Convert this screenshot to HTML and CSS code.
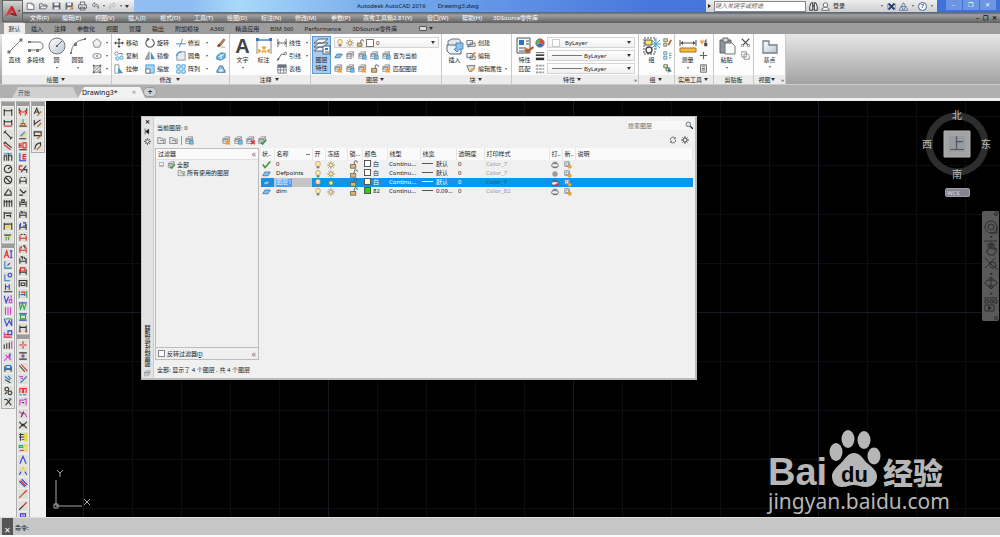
FILE: index.html
```html
<!DOCTYPE html>
<html lang="zh-CN">
<head>
<meta charset="utf-8">
<title>Autodesk AutoCAD 2016 Drawing3.dwg</title>
<link rel="stylesheet" href="styles.css">
</head>
<body>
<svg class="defs" aria-hidden="true">
<defs>
<linearGradient id="gb" x1="0" y1="0" x2="1" y2="1"><stop offset="0" stop-color="#fff"/><stop offset="1" stop-color="#b9c4d2"/></linearGradient>
<symbol id="new" viewBox="0 0 16 16"><path d="M2 3h8l4 3v8H2z" fill="#fff" stroke="#555b66" stroke-width="1.5"/><path d="M10 3v3h4" fill="none" stroke="#555b66"/></symbol>
<symbol id="open" viewBox="0 0 16 16"><path d="M1 13V4h5l1 2h6v2M1 13l3-5h11l-3 5z" fill="#e8edf2" stroke="#555b66" stroke-width="1.4"/></symbol>
<symbol id="save" viewBox="0 0 16 16"><path d="M1 2h14v12H1z" fill="#5d6570"/><path d="M4 2h8v5H4zM4 10h8v4H4z" fill="#eef2f6"/></symbol>
<symbol id="saveas" viewBox="0 0 16 16"><path d="M1 2h13v12H1z" fill="#5d6570"/><path d="M4 2h7v5H4zM4 10h7v4H4z" fill="#eef2f6"/><path d="M8 14l6-8 2 2-6 7z" fill="#e39b3a"/></symbol>
<symbol id="print" viewBox="0 0 16 16"><path d="M4 6V1h8v5M1 6h14v6H1zM4 10h8v5H4z" fill="#f3f5f7" stroke="#4b515b" stroke-width="1.5"/></symbol>
<symbol id="undo" viewBox="0 0 16 16"><path d="M6 2L2 6l4 4V7.500q6-1 7 5 3-8-7-8z" fill="#e9edf2" stroke="#5b626d" stroke-width="1.300"/></symbol>
<symbol id="redo" viewBox="0 0 16 16"><path d="M10 2l4 4-4 4V7.500q-6-1-7 5-3-8 7-8z" fill="#eee" stroke="#aaa" stroke-width="1.300"/></symbol>
<symbol id="line" viewBox="0 0 18 18"><path d="M3 15L15 3" stroke="#777" stroke-width="1"/><path d="M1.500 13.500h3v3h-3zM13.500 1.500h3v3h-3z" fill="#777"/></symbol>
<symbol id="pline" viewBox="0 0 18 18"><path d="M2 5h9q5 0 5 4t-5 4H3" fill="none" stroke="#777"/><path d="M1 4h3v2H1zM1 12h3v3H1zM9 12h3v3H9z" fill="#777"/></symbol>
<symbol id="circle" viewBox="0 0 18 18"><circle cx="9" cy="9" r="8" fill="url(#gb)" stroke="#777"/><path d="M9 9l5-5" stroke="#666"/><path d="M8 8h2v2H8z" fill="#666"/></symbol>
<symbol id="arc" viewBox="0 0 18 18"><path d="M2 16Q3 4 16 2" fill="none" stroke="#777"/><path d="M1 15h2v2H1zM5 6h3v3H5zM15 1h2v2h-2z" fill="#777"/></symbol>
<symbol id="poly" viewBox="0 0 12 12"><path d="M6 1l5 4-2 6H3L1 5z" fill="#edf1f5" stroke="#777"/></symbol>
<symbol id="ell" viewBox="0 0 12 12"><ellipse cx="6" cy="6" rx="5" ry="3" fill="#edf1f5" stroke="#777"/><circle cx="6" cy="6" r="1" fill="#555"/></symbol>
<symbol id="hatch" viewBox="0 0 12 12"><path d="M2 2h8v8H2zM2 6l4-4M2 10l8-8M6 10l4-4" fill="#dde2e8" stroke="#888"/><path d="M1 1h2v2H1zM9 1h2v2H9zM1 9h2v2H1zM9 9h2v2H9z" fill="#555"/></symbol>
<symbol id="move" viewBox="0 0 12 12"><path d="M6 0l2 2.500H6.600v2.900h2.900V4L12 6 9.500 8V6.600H6.600v2.900H8L6 12 4 9.500h1.400V6.600H2.500V8L0 6l2.500-2v1.400h2.900V2.500H4z" fill="#444"/></symbol>
<symbol id="rotate" viewBox="0 0 12 12"><path d="M4 1.500A5 5 0 1 0 8 1.500" fill="none" stroke="#555" stroke-width="1.300"/><path d="M2 0l4 1-3 3z" fill="#555"/></symbol>
<symbol id="trim" viewBox="0 0 12 12"><path d="M0 7h12" stroke="#4ba2d8" stroke-width="1.300"/><path d="M4 11L8 1" stroke="#777"/></symbol>
<symbol id="erase" viewBox="0 0 12 12"><path d="M3 8l6-7 2 1-5 7z" fill="#b98553" stroke="#7a5530" stroke-width=".6"/><path d="M1 10l2-3 3 2-2 2z" fill="#8a4a2a"/><path d="M6 11h5" stroke="#999"/></symbol>
<symbol id="copy" viewBox="0 0 12 12"><circle cx="3" cy="3" r="2" fill="#fff" stroke="#777"/><circle cx="4" cy="9" r="2" fill="#d9efff" stroke="#3c95cf"/><circle cx="9" cy="8" r="2" fill="#d9efff" stroke="#3c95cf"/><path d="M6 3h4v2" fill="none" stroke="#777"/></symbol>
<symbol id="mirror" viewBox="0 0 12 12"><path d="M5 1v9H0z" fill="#aaa" stroke="#777" stroke-width=".7"/><path d="M7 1v9h5z" fill="#3c95cf"/></symbol>
<symbol id="fillet" viewBox="0 0 12 12"><path d="M1 11V6q0-5 6-5h4v10z" fill="#e6edf3" stroke="#888"/><path d="M1 6q0-5 6-5" fill="none" stroke="#3c95cf" stroke-width="1.500"/></symbol>
<symbol id="explode" viewBox="0 0 12 12"><path d="M1 6l5-4 5 1v5l-5 3-5-1z" fill="#6fb4e2" stroke="#3781b3"/><path d="M3 7l7-3M6 4v6" stroke="#fff"/></symbol>
<symbol id="stretch" viewBox="0 0 12 12"><path d="M1 1h5v10H1z" fill="#fff" stroke="#888"/><path d="M5 4l6 7H5z" fill="#3c95cf"/></symbol>
<symbol id="scale" viewBox="0 0 12 12"><path d="M1 1h10v10H1z" fill="#a9d5f2" stroke="#3c95cf"/><path d="M1 6h5v5H1z" fill="#fff" stroke="#666"/></symbol>
<symbol id="array" viewBox="0 0 12 12"><path d="M1 1h4v4H1zM7 1h4v4H7zM1 7h4v4H1zM7 7h4v4H7z" fill="#d9efff" stroke="#3c95cf"/></symbol>
<symbol id="offset" viewBox="0 0 12 12"><path d="M1 10q0-4 2-4 0-4 3-4t3 4q2 0 2 4z" fill="#8cc5ea" stroke="#3d6583"/><path d="M4 9q0-3 2-3t2 3z" fill="#fff"/></symbol>
<symbol id="dim" viewBox="0 0 18 18"><path d="M2 3v14M16 3v14" stroke="#888"/><path d="M3 3h12" stroke="#4289d2" stroke-width="1.500"/><path d="M1 1h3v3H1zM14 1h3v3h-3z" fill="#3578cb"/><path d="M4 16v-3l2 1M9 9v3M9 12l-2-2M9 12l2-2M14 16v-3l-2 1M7 16l1-2 2 0 1 2" fill="none" stroke="#eba530" stroke-width="1.500"/></symbol>
<symbol id="lin" viewBox="0 0 12 12"><path d="M1 1v10M11 1v10M1 6h10M3 4L1 6l2 2M9 4l2 2-2 2" fill="none" stroke="#555"/></symbol>
<symbol id="leader" viewBox="0 0 12 12"><path d="M1 11L5 4h4" fill="none" stroke="#555"/><circle cx="10" cy="3" r="1.500" fill="#fff" stroke="#555"/><path d="M0 12l1-4 2 2z" fill="#555"/></symbol>
<symbol id="table" viewBox="0 0 12 12"><path d="M1 1h10v10H1zM1 4h10M1 7h10M4 4v7M8 4v7" fill="#fff" stroke="#6b7280"/><path d="M1 1h10v3H1z" fill="#6b7280"/></symbol>
<symbol id="layers" viewBox="0 0 18 18"><path d="M1 6l5-4h9l-5 4zM1 10l5-4h9l-5 4zM1 14l5-4h9l-5 4z" fill="#f5f7f9" stroke="#5d6670"/><path d="M10 9h7v8h-7z" fill="#fff" stroke="#3b5f86"/><path d="M12 11h3v2h-3z" fill="#3c78b8"/><path d="M12 15h4" stroke="#555"/></symbol>
<symbol id="bulb" viewBox="0 0 12 12"><path d="M4 8Q2.500 6 2.500 4a3.500 3.500 0 0 1 7 0q0 2-1.500 4z" fill="#ffe9a4" stroke="#a99565"/><path d="M4 8h4v3H4z" fill="#777"/></symbol>
<symbol id="sun" viewBox="0 0 12 12"><path d="M6 0v12M0 6h12M2 2l8 8M10 2l-8 8" stroke="#8a7a55"/><circle cx="6" cy="6" r="3" fill="#ffe7a0" stroke="#9a8450"/></symbol>
<symbol id="lock" viewBox="0 0 12 12"><path d="M7 6V3q0-2 2-2t2 2v1" fill="none" stroke="#555" stroke-width="1.200"/><path d="M2 6h7v5H2z" fill="#d9b683" stroke="#6a5a3a"/></symbol>
<symbol id="lay" viewBox="0 0 12 12"><path d="M1 4l3-3h6L7 4zM1 7l3-3h6L7 7zM1 10V4h6v6zM7 10l3-3V1" fill="#e8ecf0" stroke="#777" stroke-width=".8"/></symbol>
<symbol id="layb" viewBox="0 0 12 12"><use href="#lay"/><path d="M6 6h5v5H6z" fill="#72bce6" stroke="#347cae" stroke-width=".7"/></symbol>
<symbol id="layo" viewBox="0 0 12 12"><use href="#lay"/><path d="M8 5l1 2h3l-2 2 1 3-3-1-3 1 1-3-2-2h3z" fill="#f19a32"/></symbol>
<symbol id="insert" viewBox="0 0 18 18"><path d="M2 4l4-2h7l2 3v6H2z" fill="#e1e7ed" stroke="#6a7684"/><path d="M1 8h11l3 3v6H4l-3-3z" fill="#eef3f7" stroke="#5a6979"/><path d="M10 6h7v6h-3l-3 3-3-3h2z" fill="#8fbfe6" stroke="#3c77ac" stroke-width=".8"/></symbol>
<symbol id="blk" viewBox="0 0 12 12"><path d="M1 3h7v5H1zM5 6h6v4H5z" fill="#eef2f5" stroke="#666"/><circle cx="3" cy="10" r="1.500" fill="#3c95cf"/></symbol>
<symbol id="blko" viewBox="0 0 12 12"><path d="M1 3h7v5H1zM5 6h6v4H5z" fill="#eef2f5" stroke="#666"/><path d="M7 5l3-4 2 1-3 4z" fill="#e98a2b"/></symbol>
<symbol id="attr" viewBox="0 0 12 12"><path d="M1 2h10L7 9H4z" fill="#ddd" stroke="#666"/><path d="M5 7l5-3 1 2-5 4z" fill="#e5a33b"/></symbol>
<symbol id="match" viewBox="0 0 18 18"><path d="M1 1h13v15H1z" fill="#f2f5f8" stroke="#4d5966"/><path d="M3 3h5v5H3z" fill="#2d74b8"/><path d="M10 4h3M10 7h3M3 11h7M3 14h5" stroke="#555"/><path d="M8 14q1-4 5-2l4-3 1 2-4 3q-2 4-6 0z" fill="#b4602d"/></symbol>
<symbol id="wheel" viewBox="0 0 12 12"><path d="M6 6V1a5 5 0 0 1 4.300 7.500z" fill="#e8463c"/><path d="M6 6l4.300 2.500a5 5 0 0 1-8.600 0z" fill="#3d63c9"/><path d="M6 6L1.700 8.500A5 5 0 0 1 6 1z" fill="#58b947"/><circle cx="6" cy="6" r="5" fill="none" stroke="#666"/></symbol>
<symbol id="lw" viewBox="0 0 12 12"><path d="M1 2h10" stroke="#444"/><path d="M1 5h10" stroke="#444" stroke-width="2"/><path d="M1 9.500h10" stroke="#333" stroke-width="3"/></symbol>
<symbol id="lt" viewBox="0 0 12 12"><path d="M1 2h10M1 6h10M1 10h10" stroke="#999" stroke-width="2" stroke-dasharray="3 1"/></symbol>
<symbol id="group" viewBox="0 0 18 18"><path d="M1 1h11v16H1z" fill="none" stroke="#555" stroke-dasharray="2 1"/><path d="M2 3h7v5H2z" fill="#f7e66a" stroke="#555"/><circle cx="6" cy="13" r="3" fill="#fff" stroke="#444" stroke-width="1.300"/><path d="M13 1v12M8 7h10M9 3l8 8M17 3l-8 8" stroke="#4aa5dd"/></symbol>
<symbol id="grp" viewBox="0 0 12 12"><path d="M1 1h5v4H1zM1 7h4v4H1z" fill="#cde6a6" stroke="#666"/><path d="M6 9l4-7 2 1-4 7z" fill="#b4602d"/></symbol>
<symbol id="grpb" viewBox="0 0 12 12"><path d="M1 1h4v4H1zM1 7h4v4H1z" fill="#cde6f6" stroke="#5685a5"/><path d="M8 3h3M8 6h3M8 9h3" stroke="#346fa2"/></symbol>
<symbol id="grps" viewBox="0 0 12 12"><path d="M1 1h5v4H1zM4 5h5v4H4z" fill="#cde6a6" stroke="#555"/><path d="M7 5l5 5H9l-2 2z" fill="#2f6fa8"/></symbol>
<symbol id="measure" viewBox="0 0 18 18"><path d="M1 3v6M17 3v6M2 6h14" stroke="#555"/><path d="M4 4L1 6l3 2zM14 4l3 2-3 2z" fill="#555"/><path d="M1 11h16v4H1z" fill="#f4bd46" stroke="#a87518"/></symbol>
<symbol id="qsel" viewBox="0 0 12 12"><path d="M10 1v4H7zM7 6h4v5H7z" fill="#444"/><path d="M4 2v7M1 5h6M2 3l4 4M6 3L2 7" stroke="#e98a2b"/></symbol>
<symbol id="point" viewBox="0 0 12 12"><path d="M6 1v10M1 6h10" stroke="#666" stroke-width="1.500"/></symbol>
<symbol id="calc" viewBox="0 0 12 12"><path d="M2 1h8v10H2z" fill="#dde2e8" stroke="#555"/><path d="M4 3h4M4 6h4M4 8h4" stroke="#555"/></symbol>
<symbol id="paste" viewBox="0 0 18 18"><path d="M2 3h11v13H2z" fill="#8d949c" stroke="#5e656d"/><path d="M5 1h5v4H5z" fill="#ddd" stroke="#666"/><path d="M7 6h7l3 3v8H7z" fill="#f7f9fb" stroke="#777"/></symbol>
<symbol id="cut" viewBox="0 0 12 12"><path d="M1 1l8 8M11 1L3 9" stroke="#555" stroke-width="1.500"/><circle cx="2" cy="10" r="1.500" fill="none" stroke="#555"/><circle cx="10" cy="10" r="1.500" fill="none" stroke="#555"/></symbol>
<symbol id="dup" viewBox="0 0 12 12"><path d="M1 1h6v7H1zM4 4h5l2 2v5H4z" fill="#fff" stroke="#777"/></symbol>
<symbol id="base" viewBox="0 0 18 18"><path d="M2 4h6v4h8v8H2z" fill="url(#gb)" stroke="#777f88" stroke-width="1.300"/></symbol>
<symbol id="binoc" viewBox="0 0 12 12"><path d="M1 11V6l2-5h2v10zM7 11V1h2l2 5v5zM5 5h2" fill="#eee" stroke="#222" stroke-width="1.200"/></symbol>
<symbol id="user" viewBox="0 0 12 12"><circle cx="6" cy="4" r="3" fill="#fff" stroke="#444"/><path d="M1 11q0-3 4-4h2q4 1 4 4z" fill="#fff" stroke="#444"/></symbol>
<symbol id="xchg" viewBox="0 0 12 12"><path d="M2 2l8 8M10 2l-8 8" stroke="#26406e" stroke-width="2.500"/><path d="M1 2v8M11 2v8" stroke="#6e84ac"/></symbol>
<symbol id="a360" viewBox="0 0 12 12"><path d="M6 1l3 5H3zM3 6l3 5H0zM9 6l3 5H6z" fill="#dce5f2" stroke="#4a638f"/></symbol>
<symbol id="plt" viewBox="0 0 12 12"><path d="M2 4h8l1 3-1 2H2L1 7zM3 2h6M3 10h6" fill="#eef2f6" stroke="#555" stroke-width="1.200"/></symbol>
<symbol id="pltx" viewBox="0 0 12 12"><use href="#plt"/><circle cx="9" cy="9" r="2.500" fill="#d9363e"/></symbol>
<symbol id="dot" viewBox="0 0 12 12"><circle cx="6" cy="6" r="4" fill="#9a9a9a"/></symbol>
<symbol id="vp" viewBox="0 0 12 12"><path d="M1 1h7v7H1zM3 3h4v4H3z" fill="#fff" stroke="#68727f"/><circle cx="8.500" cy="8.500" r="2.500" fill="#f6b13b" stroke="#d48b1a"/></symbol>
<symbol id="tick" viewBox="0 0 12 12"><path d="M1 6l3 4 7-8" fill="none" stroke="#3a9b35" stroke-width="2.200"/></symbol>
<symbol id="sheet" viewBox="0 0 12 12"><path d="M1 9l3-5h7L8 9z" fill="#83c0ea" stroke="#2f6fa8"/></symbol>
<symbol id="fold" viewBox="0 0 12 12"><path d="M1 2h4l1 2h5v6H1zM4 6h5v4" fill="#e6e6e6" stroke="#777"/></symbol>
<symbol id="layt" viewBox="0 0 12 12"><use href="#lay"/><path d="M4 8l2 3 5-6" fill="none" stroke="#2f9e35" stroke-width="2"/></symbol>
<symbol id="layx" viewBox="0 0 12 12"><use href="#lay"/><path d="M7 6l5 5M12 6l-5 5" stroke="#d9303a" stroke-width="2"/></symbol>
<symbol id="mag" viewBox="0 0 12 12"><circle cx="5" cy="5" r="3.500" fill="#d9ebf7" stroke="#444"/><path d="M8 8l4 4" stroke="#222" stroke-width="2"/></symbol>
<symbol id="refresh" viewBox="0 0 12 12"><path d="M2 6a4 4 0 0 1 7-3M10 6a4 4 0 0 1-7 3" fill="none" stroke="#666" stroke-width="1.400"/><path d="M10 1v4H7zM2 11V7h3z" fill="#666"/></symbol>
<symbol id="gear" viewBox="0 0 12 12"><path d="M6 0v12M0 6h12M2 2l8 8M10 2l-8 8" stroke="#555" stroke-width="1.500"/><circle cx="6" cy="6" r="3" fill="#eee" stroke="#555" stroke-width="1.500"/></symbol>
</defs>
</svg>

<div class="app">
<header class="top">
  <button class="logo" aria-label="应用程序菜单"><svg viewBox="0 0 20 20"><path d="M1 17L9 2h3l7 15-5-2-3-7-4 6z" fill="#c8202a"/><path d="M1 17l8-15 1 7-3 5z" fill="#dc3b3b"/><path d="M7 14l4-2 8 5-5-1z" fill="#8d0f18"/></svg><i class="caret"></i></button>
  <div class="topbars">
    <div class="titlebar">
      <div class="qat">
        <button aria-label="新建"><svg><use href="#new"/></svg></button><button aria-label="打开"><svg><use href="#open"/></svg></button><button aria-label="保存"><svg><use href="#save"/></svg></button><button aria-label="另存为"><svg><use href="#saveas"/></svg></button><button aria-label="打印"><svg><use href="#print"/></svg></button><button aria-label="放弃"><svg><use href="#undo"/></svg></button><i class="caret sm"></i><button aria-label="重做"><svg><use href="#redo"/></svg></button><i class="caret sm"></i><i class="caret"></i>
      </div>
      <div class="apptitle"><span>Autodesk AutoCAD 2016</span><span>Drawing3.dwg</span></div>
      <div class="info">
        <i class="tri"></i><input type="text" aria-label="搜索" placeholder="键入关键字或短语">
        <button aria-label="查找"><svg><use href="#binoc"/></svg></button><button class="login"><svg><use href="#user"/></svg>登录</button><i class="caret sm"></i><button aria-label="Exchange"><svg><use href="#xchg"/></svg></button><button aria-label="A360"><svg><use href="#a360"/></svg></button><i class="caret sm"></i><button class="help">?</button><i class="caret sm"></i>
      </div>
      <div class="winctl"><button aria-label="最小化">–</button><button aria-label="还原">❐</button><button aria-label="关闭">✕</button></div>
    </div>
    <nav class="menubar"><div class="menus"><button>文件(F)</button><button>编辑(E)</button><button>视图(V)</button><button>插入(I)</button><button>格式(O)</button><button>工具(T)</button><button>绘图(D)</button><button>标注(N)</button><button>修改(M)</button><button>参数(P)</button><button>燕秀工具箱2.81(Y)</button><button>窗口(W)</button><button>帮助(H)</button><button>3DSource零件库</button></div>
    <div class="docctl"><button aria-label="最小化文档">–</button><button aria-label="还原文档">❐</button><button aria-label="关闭文档">✕</button></div></nav>
  </div>
</header>
<nav class="tabs"><button class="on">默认</button><button>插入</button><button>注释</button><button>参数化</button><button>视图</button><button>管理</button><button>输出</button><button>附加模块</button><button>A360</button><button>精选应用</button><button>BIM 360</button><button>Performance</button><button>3DSource零件库</button><button class="ribtog" aria-label="最小化功能区"><b></b><i class="caret"></i></button></nav>

<main class="ribbon">
  <section class="panel draw"><div class="body">
    <button class="big"><svg><use href="#line"/></svg>直线</button><button class="big"><svg><use href="#pline"/></svg>多段线</button><button class="big"><svg><use href="#circle"/></svg>圆<i class="caret sm"></i></button><button class="big"><svg><use href="#arc"/></svg>圆弧<i class="caret sm"></i></button>
    <div class="col"><button aria-label="多边形"><svg><use href="#poly"/></svg><i class="caret sm"></i></button><button aria-label="椭圆"><svg><use href="#ell"/></svg><i class="caret sm"></i></button><button aria-label="图案填充"><svg><use href="#hatch"/></svg><i class="caret sm"></i></button></div>
  </div><footer>绘图<i class="caret"></i></footer></section>
  <section class="panel modify"><div class="body">
    <div class="col"><button><svg><use href="#move"/></svg>移动</button><button><svg><use href="#copy"/></svg>复制</button><button><svg><use href="#stretch"/></svg>拉伸</button></div>
    <div class="col"><button><svg><use href="#rotate"/></svg>旋转</button><button><svg><use href="#mirror"/></svg>镜像</button><button><svg><use href="#scale"/></svg>缩放</button></div>
    <div class="col"><button><svg><use href="#trim"/></svg>修剪<i class="caret sm"></i></button><button><svg><use href="#fillet"/></svg>圆角<i class="caret sm"></i></button><button><svg><use href="#array"/></svg>阵列<i class="caret sm"></i></button></div>
    <div class="col"><button aria-label="删除"><svg><use href="#erase"/></svg></button><button aria-label="分解"><svg><use href="#explode"/></svg></button><button aria-label="偏移"><svg><use href="#offset"/></svg></button></div>
  </div><footer>修改<i class="caret"></i></footer></section>
  <section class="panel note"><div class="body">
    <button class="big"><span class="bigA">A</span>文字<i class="caret sm"></i></button><button class="big"><svg><use href="#dim"/></svg>标注</button>
    <div class="col"><button><svg><use href="#lin"/></svg>线性<i class="caret sm"></i></button><button><svg><use href="#leader"/></svg>引线<i class="caret sm"></i></button><button><svg><use href="#table"/></svg>表格</button></div>
  </div><footer>注释<i class="caret"></i></footer></section>
  <section class="panel layer"><div class="body">
    <button class="big on"><svg><use href="#layers"/></svg>图层<br>特性</button>
    <div class="col wide"><button class="combo"><svg><use href="#bulb"/></svg><svg><use href="#sun"/></svg><svg><use href="#lock"/></svg><b class="sw"></b>0<i class="caret"></i></button>
      <div class="icons"><button aria-label="关"><svg><use href="#sheet"/></svg></button><button aria-label="隔离"><svg><use href="#lay"/></svg></button><button aria-label="冻结"><svg><use href="#layb"/></svg></button><button aria-label="锁定"><svg><use href="#layb"/></svg></button><button><svg><use href="#layb"/></svg>置为当前</button></div>
      <div class="icons"><button aria-label="打开所有图层"><svg><use href="#layo"/></svg></button><button aria-label="取消隔离"><svg><use href="#layb"/></svg></button><button aria-label="解冻"><svg><use href="#layo"/></svg></button><button aria-label="解锁"><svg><use href="#lock"/></svg></button><button><svg><use href="#layo"/></svg>匹配图层</button></div></div>
  </div><footer>图层<i class="caret"></i></footer></section>
  <section class="panel block"><div class="body">
    <button class="big"><svg><use href="#insert"/></svg>插入</button>
    <div class="col"><button><svg><use href="#blk"/></svg>创建</button><button><svg><use href="#blko"/></svg>编辑</button><button><svg><use href="#attr"/></svg>编辑属性<i class="caret sm"></i></button></div>
  </div><footer>块<i class="caret"></i></footer></section>
  <section class="panel props"><div class="body">
    <button class="big"><svg><use href="#match"/></svg>特性<br>匹配</button>
    <div class="col"><button aria-label="颜色"><svg><use href="#wheel"/></svg></button><button aria-label="线宽"><svg><use href="#lw"/></svg></button><button aria-label="线型"><svg><use href="#lt"/></svg></button></div>
    <div class="col wide"><button class="combo"><b class="sw"></b><span>ByLayer</span><i class="caret"></i></button><button class="combo"><b class="rule"></b>ByLayer<i class="caret"></i></button><button class="combo"><b class="rule"></b>ByLayer<i class="caret"></i></button></div>
  </div><footer>特性<i class="caret"></i><em>»</em></footer></section>
  <section class="panel grp"><div class="body">
    <button class="big"><svg><use href="#group"/></svg>组</button>
    <div class="col"><button aria-label="解除编组"><svg><use href="#grp"/></svg></button><button aria-label="组编辑"><svg><use href="#grpb"/></svg></button><button aria-label="组选择"><svg><use href="#grps"/></svg></button></div>
  </div><footer>组<i class="caret"></i></footer></section>
  <section class="panel util"><div class="body">
    <button class="big"><svg><use href="#measure"/></svg>测量<i class="caret sm"></i></button>
    <div class="col"><button aria-label="快速选择"><svg><use href="#qsel"/></svg></button><button aria-label="点"><svg><use href="#point"/></svg></button><button aria-label="计算器"><svg><use href="#calc"/></svg></button></div>
  </div><footer>实用工具<i class="caret"></i></footer></section>
  <section class="panel clip"><div class="body">
    <button class="big"><svg><use href="#paste"/></svg>粘贴<i class="caret sm"></i></button>
    <div class="col"><button aria-label="剪切"><svg><use href="#cut"/></svg></button><button aria-label="复制裁剪"><svg><use href="#dup"/></svg></button></div>
  </div><footer>剪贴板</footer></section>
  <section class="panel view"><div class="body"><button class="big"><svg><use href="#base"/></svg>基点<i class="caret sm"></i></button></div><footer>视图<i class="caret"></i><em>»</em></footer></section>
</main>

<nav class="doctabs"><button>开始</button><button class="on">Drawing3*<i>×</i></button><button class="plus" aria-label="新图形">+</button></nav>

<div class="work">
  <aside class="strips">
    <div class="strip"><i class="grip"></i><div class="tools a1" data-set="dimension"></div><i class="grip"></i><div class="tools a2" data-set="text"></div></div>
    <div class="strip"><i class="grip"></i><div class="tools b1" data-set="dimedit"></div><i class="grip"></i><div class="tools b2" data-set="draw"></div></div>
    <div class="strip"><i class="grip"></i><div class="tools c1" data-set="style"></div></div>
  </aside>
  <div class="canvas">
    <section class="manager">
      <div class="spine"><button aria-label="关闭">✕</button><button aria-label="自动隐藏"><svg viewBox="0 0 12 12"><path d="M2 1v10M3 6l5-4v8z" fill="#111" stroke="#111"/></svg></button><button aria-label="特性"><svg><use href="#gear"/></svg></button><span>图层特性管理器</span><svg><use href="#lay"/></svg></div>
      <div class="mgr">
        <div class="mtop"><span>当前图层: 0</span><label class="find"><input type="text" placeholder="搜索图层" aria-label="搜索图层"><svg><use href="#mag"/></svg></label></div>
        <div class="mtools"><button aria-label="新建特性过滤器"><svg><use href="#fold"/></svg></button><button aria-label="新建组过滤器"><svg><use href="#fold"/></svg></button><b></b><button aria-label="图层状态管理器"><svg><use href="#layb"/></svg></button><div class="mid"><button aria-label="新建图层"><svg><use href="#layo"/></svg></button><button aria-label="冻结的新图层"><svg><use href="#layb"/></svg></button><button aria-label="删除图层"><svg><use href="#layx"/></svg></button><button aria-label="置为当前"><svg><use href="#layt"/></svg></button></div><div class="end"><button aria-label="刷新"><svg><use href="#refresh"/></svg></button><button aria-label="设置"><svg><use href="#gear"/></svg></button></div></div>
        <div class="split">
          <div class="filter"><div class="fhead">过滤器<span>«</span></div>
            <ul class="tree"><li><b>−</b><svg><use href="#layt"/></svg>全部<ul><li><svg><use href="#fold"/></svg>所有使用的图层</li></ul></li></ul>
            <div class="ffoot"><label><input type="checkbox">反转过滤器(<u>I</u>)</label><span>«</span></div></div>
          <div class="list"><table>
            <colgroup><col class="w13"><col class="w38"><col class="w13"><col class="w22"><col class="w15"><col class="w25"><col class="w33"><col class="w36"><col class="w28"><col class="w65"><col class="w13"><col class="w13"><col></colgroup>
            <thead><tr><th>状..</th><th class="sort">名称</th><th>开</th><th>冻结</th><th>锁...</th><th>颜色</th><th>线型</th><th>线宽</th><th>透明度</th><th>打印样式</th><th>打..</th><th>新..</th><th>说明</th></tr></thead>
            <tbody>
            <tr><td><svg><use href="#tick"/></svg></td><td>0</td><td><svg><use href="#bulb"/></svg></td><td><svg><use href="#sun"/></svg></td><td><svg><use href="#lock"/></svg></td><td><b class="sw"></b>白</td><td>Continu...</td><td><b class="rule"></b>默认</td><td>0</td><td class="dimmed">Color_7</td><td><svg><use href="#plt"/></svg></td><td><svg><use href="#vp"/></svg></td><td></td></tr>
            <tr><td><svg><use href="#sheet"/></svg></td><td>Defpoints</td><td><svg><use href="#bulb"/></svg></td><td><svg><use href="#sun"/></svg></td><td><svg><use href="#lock"/></svg></td><td><b class="sw"></b>白</td><td>Continu...</td><td><b class="rule"></b>默认</td><td>0</td><td class="dimmed">Color_7</td><td><svg><use href="#dot"/></svg></td><td><svg><use href="#vp"/></svg></td><td></td></tr>
            <tr class="sel"><td><svg><use href="#sheet"/></svg></td><td class="edit"><input type="text" value="图层1" aria-label="名称"></td><td><svg><use href="#bulb"/></svg></td><td><svg><use href="#sun"/></svg></td><td><svg><use href="#lock"/></svg></td><td><b class="sw"></b>白</td><td>Continu...</td><td><b class="rule"></b>默认</td><td>0</td><td class="dimmed">Color_7</td><td><svg><use href="#pltx"/></svg></td><td><svg><use href="#vp"/></svg></td><td></td></tr>
            <tr><td><svg><use href="#sheet"/></svg></td><td>dim</td><td><svg><use href="#bulb"/></svg></td><td><svg><use href="#sun"/></svg></td><td><svg><use href="#lock"/></svg></td><td><b class="sw green"></b>82</td><td>Continu...</td><td><b class="rule"></b>0.09...</td><td>0</td><td class="dimmed">Color_82</td><td><svg><use href="#plt"/></svg></td><td><svg><use href="#vp"/></svg></td><td></td></tr>
            </tbody></table></div>
        </div>
        <div class="mstatus">全部: 显示了 4 个图层 , 共 4 个图层</div>
      </div>
    </section>
    <svg class="cube" viewBox="0 0 76 76"><circle cx="38" cy="39" r="28" fill="none" stroke="#2d2d2d" stroke-width="7"/><path d="M25 26h26v26H25z" fill="#a3a3a3" stroke="#b3b3b3"/><path d="M30 31h16v16H30z" fill="#969ba1"/><g fill="#a8a8a8" font-size="10" font-weight="500" text-anchor="middle"><text x="38" y="14">北</text><text x="38" y="73">南</text><text x="8" y="43">西</text><text x="67" y="43">东</text></g><text x="38" y="44" font-size="15" text-anchor="middle" fill="#505254">上</text></svg>
    <button class="wcs">WCS</button>
    <div class="navbar"><svg viewBox="0 0 17 110"><g fill="none" stroke="#2c2c2c"><circle cx="14" cy="3" r="1.500"/><circle cx="9" cy="16" r="6"/><circle cx="9" cy="16" r="3"/><path d="M9 22h6v-6M2 30h13M4 40l3 4h5l3-6-2-1-1 2v-6h-2v5-6H8v6-5H6v7z"/><path d="M3 47l10 10M13 47L3 57"/><circle cx="11" cy="54" r="3"/><path d="M13 56l3 3M9 66v12M6 69l3-3 3 3M6 75l3 3 3-3"/><ellipse cx="9" cy="72" rx="6" ry="3"/><path d="M2 87h13M3 89h3v3H3zM8 89h3v3H8zM12 89h3v3h-3zM3 94h9v6H3z"/><circle cx="14" cy="107" r="1.500"/></g><path d="M6 95l4 2-4 2zM8 25h3l-2 2zM8 62h3l-2 2zM8 82h3l-2 2z" fill="#222"/></svg></div>
    <svg class="ucs" viewBox="0 0 42 42"><path d="M6 11v26h26M4 35h4v4H4zM7 1l3 3 3-3M10 4v4M34 30l6 6M40 30l-6 6" fill="none" stroke="#aaa"/></svg>
    <svg class="brand" viewBox="0 0 182 86"><g fill="#b6b6b6"><ellipse cx="68" cy="22" rx="6.500" ry="9"/><ellipse cx="80" cy="9" rx="6.500" ry="9"/><ellipse cx="96" cy="10" rx="6.500" ry="9"/><ellipse cx="106" cy="26" rx="6.500" ry="8.500"/><path d="M86 23c6 0 9 6 13 10 5 4 10 8 10 13 0 7-5 11-11 11-5 0-8-2-12-2s-7 2-12 2c-6 0-10-4-10-11 0-5 5-9 9-13s7-10 13-10z"/><text x="0" y="55" font-size="38" font-weight="700" class="bai">Bai</text><text x="115" y="54" font-size="30" font-weight="900" class="cn">经验</text><text x="0" y="79" font-size="21" class="url">jingyan.baidu.com</text></g><text x="73" y="52" font-size="22" font-weight="700" class="bai" fill="#080808">du</text></svg>
  </div>
</div>
<footer class="cmd"><button aria-label="关闭命令行">✕</button><label for="cmdline">命令:</label><input id="cmdline" type="text"></footer>
</div>
<script src="script.js"></script>
</body>
</html>
```
FILE: styles.css
```css
* { box-sizing: border-box; }
body { margin: 0; font: 6px/8px "Noto Sans", "Noto Sans CJK SC", sans-serif; color: #222; background: #f0f0f0; overflow: hidden; }
button, input { font: inherit; color: inherit; background: none; border: 0; padding: 0; margin: 0; min-width: 0; }
button { display: flex; align-items: center; justify-content: center; white-space: nowrap; }
svg { width: 10px; height: 10px; flex: none; display: block; }
ul { list-style: none; margin: 0; padding: 0; }
.defs { position: absolute; width: 0; height: 0; }
.app { display: flex; flex-direction: column; height: 100vh; }
.caret { flex: none; width: 0; height: 0; border: 2px solid transparent; border-top: 3px solid #333; border-bottom: 0; margin: 0 2px; }
.caret.sm { border-width: 1px; border-top: 2px solid #555; border-bottom: 0; }
.sw { display: inline-block; flex: none; width: 7px; height: 7px; background: #fff; border: 1px solid #555; }
.sw.green { background: #2bd400; }
.rule { display: inline-block; flex: none; height: 1px; background: #555; }

.top { display: flex; height: 23px; padding-left: 2px; background: #929292; }
.logo { width: 21px; height: 22px; background: linear-gradient(#d5d5d5, #777); border: 1px solid #666; }
.logo svg { width: 13px; height: 15px; }
.logo .caret { border-width: 1px; border-top-width: 2px; margin: 0; }
.topbars { flex: 1; }
.titlebar { display: flex; height: 13px; background: linear-gradient(90deg, #9fc4f2, #8cbcf2 17%, #a8d9fb 22%, #7eb2ee 34%, #5d92e6 50%, #4577dc 65%, #3e70da); border-bottom: 1px solid #596a86; }
.qat { display: flex; align-items: center; gap: 3px; width: 111px; padding-left: 3px; background: linear-gradient(#f2f2f2, #cdcdcd); }
.qat svg { width: 9px; height: 10px; }
.qat .caret { margin: 0; }
.qat button + button { margin-left: 1px; }
.apptitle { flex: 1; display: flex; gap: 12px; padding-left: 223px; align-items: center; color: #101830; white-space: nowrap; }
.info { display: flex; align-items: center; width: 231px; gap: 3px; background: linear-gradient(#eee, #cfcfcf); }
.info input { width: 92px; height: 11px; background: #fff; border: 1px solid #888; font-style: italic; }
.tri { border: 2px solid transparent; border-left: 3px solid #222; border-right: 0; margin-left: 2px; }
.login { width: 56px; gap: 3px; justify-content: flex-start; }
.info .caret { margin: 0 1px; }
.info svg { width: 9px; height: 9px; }
.help { width: 9px; height: 9px; border: 1px solid #3c5fa0; border-radius: 50%; background: #fff; color: #234c9c; font-weight: 700; }
.winctl { display: flex; justify-content: space-around; width: 63px; padding: 0 4px 2px 8px; color: #fff; }
.winctl button { width: 16px; background: #6c96e2; }
.menubar { display: flex; justify-content: space-between; height: 10px; background: linear-gradient(#6c6c6c, #a0a0a0 20%, #5f5f5f); color: #fff; }
.menus { display: grid; grid-template-columns: 32px 33px 33px 32px 34px 33px 34px 34px 36px 32px 64px 35px 31px 60px; padding-left: 7px; }
.menus button { justify-content: flex-start; }
.docctl { display: flex; gap: 4px; padding-right: 3px; color: #111; font-weight: 700; }
.tabs { display: flex; gap: 11px; height: 11px; padding-left: 4px; background: #9c9c9c; color: #1d1d1d; }
.tabs .on { width: 21px; background: #eee; margin-right: -5px; }
.tabs .ribtog { margin-left: 11px; }
.tabs .ribtog b { width: 8px; height: 5px; border: 1px solid #555; background: #ddd; border-radius: 1px; }

.ribbon { display: flex; height: 51px; padding-left: 2px; background: linear-gradient(#e6e6e6, #a2a2a2); border-bottom: 1px solid #ccc; }
.panel { display: flex; flex-direction: column; border-right: 1px solid #c8c8c8; background: #fdfdfd; }
.panel .body { flex: 1; display: flex; padding: 2px 2px 0; }
.panel footer { display: flex; align-items: center; justify-content: center; height: 9px; background: #ececec; }
.panel footer em { font-style: normal; margin-left: auto; padding-right: 1px; }
.panel footer:has(em)::before { content: ""; margin-right: auto; }
.big { flex-direction: column; justify-content: flex-start; width: 21px; line-height: 9px; gap: 1px; padding-top: 1px; }
.big svg { width: 18px; height: 18px; }
.big .caret { margin-top: 1px; }
.col { display: grid; grid-template-rows: repeat(3, 13px); flex: 1; min-width: 0; align-content: start; }
.col button { justify-content: flex-start; gap: 2px; }
.bigA { height: 18px; font: 700 20px/18px "Liberation Sans", sans-serif; color: #444; }
.draw { width: 110px; }
.draw .col { padding-left: 4px; }
.modify { width: 118px; }
.modify .body { padding-left: 2px; }
.modify .col { flex: 0 0 31px; }
.modify .col:nth-child(3) { flex-basis: 40px; }
.modify .col:nth-child(4) { flex-basis: 12px; }
.modify .caret { margin-left: 4px; }
.note { width: 81px; }
.note .col { padding-left: 3px; }
.note .caret { margin-left: 3px; }
.layer { width: 131px; }
.layer .body { padding-left: 1px; }
.big.on { width: 19px; height: 38px; background: #a9cdf0; border: 1px solid #5b9bd5; line-height: 8px; padding: 0; }
.layer .wide { padding-left: 3px; }
.combo { border: 1px solid #d4d4d4; background: linear-gradient(#fff, #f0f0f0); height: 11px; padding: 0 1px; align-self: center; }
.combo .caret { margin-left: auto; }
.combo .sw { width: 8px; height: 8px; border-color: #777; }
.combo svg { width: 8px; height: 8px; }
.icons { display: flex; gap: 3px; align-items: center; }
.icons svg { width: 9px; height: 9px; }
.block { width: 70px; }
.block .col { padding-left: 1px; }
.block .col .caret { margin: 0 1px; }
.props { width: 127px; }
.props .col { flex: 0 0 12px; }
.props .wide { flex: 1; padding-right: 1px; }
.props .sw { border-color: #ccc; margin: 0 3px; }
.props .rule { width: 30px; margin-left: 3px; background: #777; }
.grp { width: 36px; }
.grp .col, .util .col { padding-left: 1px; }
.grp .col svg, .util .col svg, .clip .col svg { width: 9px; height: 9px; }
.util { width: 39px; }
.util footer { white-space: nowrap; }
.clip { width: 40px; }
.clip .col { padding-left: 4px; }
.view { width: 32px; }
.view .body { justify-content: center; }
.view .caret { margin: 0 1px; }

.doctabs { display: flex; height: 16px; padding: 2px 0 0 12px; background: #b0b0b0; border-bottom: 3px solid #eee; }
.doctabs button { width: 66px; background: #d0d0d0; clip-path: polygon(6px 0, calc(100% - 5px) 0, 100% 100%, 0 100%); justify-content: flex-start; padding-left: 6px; color: #555; }
.doctabs button.on { width: 67px; background: #f2f2f2; padding-left: 4px; justify-content: space-between; padding-right: 9px; color: #111; font-size: 7px; }
.doctabs i { font-style: normal; color: #888; }
.doctabs .plus { width: 14px; clip-path: none; border-radius: 5px; border: 1px solid #999; padding: 0; justify-content: center; margin: 0 0 1px -2px; font-weight: 700; font-size: 8px; color: #333; }

.work { flex: 1; min-height: 0; display: flex; }
.strips { display: flex; align-items: flex-start; width: 46px; gap: 1px; padding-left: 1px; background: #f0f0f0; overflow: hidden; }
.strip { width: 14px; border: 1px solid #aaa; border-top: 0; background: #ececec; }
.grip { display: block; height: 5px; background: #9b9b9b; border-top: 1px solid #bbb; }
.tools { display: flex; flex-direction: column; }
.tools button { flex: 1; min-height: 0; }
.tools svg { background: #e0e0da; }
.a1 { height: 137px; } .a2 { height: 160px; } .b1 { height: 228px; } .b2 { height: 184px; } .c1 { height: 46px; }
.canvas { flex: 1; position: relative; overflow: hidden; background-color: #000; background-image: repeating-linear-gradient(90deg, #181824 0 1px, transparent 1px 245px), repeating-linear-gradient(#181824 0 1px, transparent 1px 245px), repeating-linear-gradient(90deg, #0d0d10 0 1px, transparent 1px 49px), repeating-linear-gradient(#0d0d10 0 1px, transparent 1px 49px); background-position: 37px 0, 0 211px, 37px 0, 0 15px; background-size: 245px 100%, 100% 245px, 49px 100%, 100% 49px; }

.manager { position: absolute; left: 95px; top: 15px; width: 556px; height: 264px; display: flex; background: #f0f0f0; border: 1px solid #c4c4c4; border-right: 2px solid #bbb; border-bottom: 2px solid #bbb; }
.spine { width: 12px; display: flex; flex-direction: column; align-items: center; gap: 3px; padding: 1px 0; background: #e3e3e3; border-right: 1px solid #ccc; }
.spine button { height: 7px; font-weight: 700; color: #111; }
.spine svg { width: 7px; height: 7px; }
.spine span { margin-top: auto; writing-mode: vertical-rl; transform: rotate(180deg); color: #111; }
.mgr { flex: 1; min-width: 0; display: flex; flex-direction: column; padding: 3px 2px 2px 1px; }
.mtop { display: flex; justify-content: space-between; height: 12px; padding-left: 2px; align-items: flex-end; }
.find { display: flex; width: 65px; height: 9px; background: #f7f7f7; align-self: flex-start; margin-top: 1px; }
.find input { flex: 1; }
.find svg { width: 8px; height: 8px; }
::placeholder { color: #666; opacity: 1; }
.mtools { display: flex; height: 16px; gap: 3px; align-items: center; padding-left: 2px; }
.mtools svg { width: 9px; height: 9px; }
.mtools > b { width: 1px; height: 9px; background: #999; }
.mid { display: flex; gap: 3px; margin-left: 25px; }
.end { display: flex; gap: 4px; margin-left: auto; padding-right: 4px; }
.end svg { width: 8px; height: 8px; }
.split { flex: 1; min-height: 0; display: flex; gap: 2px; }
.filter { width: 104px; display: flex; flex-direction: column; border: 1px solid #bdbdbd; }
.fhead { display: flex; justify-content: space-between; height: 11px; padding: 1px 2px; background: #fafafa; border-bottom: 1px solid #ddd; }
.fhead span, .ffoot span { font-size: 9px; color: #777; }
.tree { flex: 1; padding: 1px 3px; }
.tree svg { display: inline-block; width: 9px; height: 8px; vertical-align: top; margin-right: 1px; }
.tree b { display: inline-block; width: 5px; height: 5px; line-height: 4px; border: 1px solid #bbb; font-size: 5px; color: #777; margin-right: 3px; }
.tree ul { padding-left: 18px; }
.ffoot { display: flex; justify-content: space-between; align-items: center; height: 12px; padding: 0 2px; border-top: 1px solid #bdbdbd; }
.ffoot label { display: flex; align-items: center; }
.ffoot input { appearance: none; width: 7px; height: 7px; border: 1px solid #888; background: #fff; margin-right: 2px; }
.list { flex: 1; min-width: 0; }
table { width: 100%; table-layout: fixed; border-collapse: collapse; }
th { height: 12px; padding: 0 0 0 2px; font-weight: 400; text-align: left; background: #fafafa; border-right: 1px solid #e6e6e6; white-space: nowrap; overflow: hidden; }
th.sort { background: linear-gradient(#777, #777) no-repeat 31px 6px / 4px 1px, #fafafa; }
td { height: 9px; padding: 0 0 0 2px; white-space: nowrap; line-height: 9px; overflow: hidden; }
td:first-child, th:first-child { padding-left: 1px; }
td svg { width: 9px; height: 9px; }
td:nth-child(3) svg, td:nth-child(4) svg, td:nth-child(11) svg, td:nth-child(12) svg { width: 8px; height: 8px; }
td .sw { margin-right: 2px; vertical-align: -1px; }
td .rule { width: 11px; margin-right: 3px; vertical-align: 2px; }
.dimmed { color: #999; }
.sel { background: #0a96f0; color: #fff; }
.sel .dimmed { color: #24557c; }
.sel .rule { background: #fff; }
.edit { background: #c4c4c4; }
.edit input { display: block; width: 16px; height: 8px; background: #4d9df5; color: #e8f2ff; }
.w13 { width: 13px; } .w38 { width: 38px; } .w22 { width: 22px; } .w15 { width: 15px; } .w25 { width: 25px; } .w33 { width: 33px; } .w36 { width: 36px; } .w28 { width: 28px; } .w65 { width: 65px; }
.mstatus { height: 16px; padding: 6px 2px 0; }

.cube { position: absolute; right: 5px; top: 4px; width: 76px; height: 76px; font-family: "Noto Sans CJK SC", sans-serif; }
.wcs { position: absolute; right: 30px; top: 87px; width: 25px; height: 9px; border-radius: 2px; border: 1px solid #a0a0a8; background: #85858f; color: #ddd; justify-content: flex-start; padding-left: 1px; }
.navbar { position: absolute; right: 1px; top: 110px; width: 17px; height: 110px; border-radius: 2px; background: #595959; }
.navbar svg { width: 17px; height: 110px; }
.ucs { position: absolute; left: 4px; bottom: 6px; width: 42px; height: 42px; }
.brand { position: absolute; right: 50px; bottom: 1px; width: 182px; height: 86px; overflow: visible; }
.bai { font-family: "Liberation Sans", sans-serif; }
.cn { font-family: "Noto Sans CJK SC", sans-serif; }
.url { font-family: "Noto Sans", sans-serif; }

.cmd { display: flex; height: 20px; padding-left: 2px; align-items: stretch; border-bottom: 2px solid #fafafa; background: #c6c6c6; border-top: 1px solid #ddd; }
.cmd button { width: 11px; background: #555; color: #fff; font-size: 8px; padding-top: 6px; }
.cmd label { padding: 6px 3px 0 2px; font-weight: 700; color: #444; }
.cmd input { flex: 1; }
```
FILE: script.js
```js
const K = '#333', R = '#e02828', B = '#2f3fd8', M = '#e033d8', Y = '#e8d820', C = '#2a7fc0', G = '#24a848', W = '#b4602d';
const H = 'M3 5v9M13 5v9M3 10h10';
const CAP = 'M4 4h3M9 4h3';
const sets = {
  dimension: [
    [[K, 'M2 3v11M14 3v11M2 6h12']], [[K, 'M2 3v9M14 3v9M2 6h12'], [R, 'M2 13h12']], [[K, 'M3 3l10 10M1 5l4-4M11 15l4-4']],
    [[K, 'M3 2l11 9M1 5l3-4'], [R, 'M2 6l10 8']], [[K, 'M2 14V6h4v8M9 2v12M9 6h5v8'], [C, 'M2 3h12']], [[K, 'M8 2a6 6 0 1 0 .1 0M8 8l4-3']],
    [[K, 'M8 2a6 6 0 1 0 .1 0M4 4l8 8']], [[K, 'M2 13L9 3M2 13h12M10 5q4 3 3 7']], [[K, 'M2 3v11M6 3v11M10 3v11M14 3v11M2 6h12']],
    [[K, 'M2 3v11M2 5h12M5 9h7M12 7v5']], [[K, 'M2 3v11M14 3v11M2 5h12'], [Y, 'M4 12l8-6M5 7l7 5']], [[K, 'M2 5h11M5 8v5'], [Y, 'M3 12l10-6'], [G, 'M9 8v5']]],
  text: [
    [[R, 'M2 14L6 3l3 11M3 10h5'], [B, 'M11 3h4M13 3v11M11 14h4']], [[C, 'M3 2v11h11'], [B, 'M7 9l4-4']], [[C, 'M3 4v10h8'], [B, 'M11 2a3 3 0 1 0 .1 0']],
    [[B, 'M4 2v9M10 2v9M4 6h6'], [K, 'M1 14h14']], [[B, 'M2 3l3 11L9 4'], [M, 'M10 9h4v5h-4zM13 2v5']], [[M, 'M4 2v12M8 2v12M12 2v12']],
    [[B, 'M2 3l4 11 4-8 4 8V3'], [G, 'M4 3h9']], [[B, 'M8 3h6v6H8z'], [R, 'M2 13h12M3 9h8'], [M, 'M2 5v9']], [[K, 'M2 7v7M6 5v9M10 4v10'], [M, 'M14 2v12']],
    [[M, 'M2 14L12 3M4 5l9 8'], [B, 'M11 2v8']], [[K, H], [C, 'M5 4h7v5H5z']], [[K, 'M3 9l9 5'], [C, 'M3 4l8 6M8 3l5 5']],
    [[K, 'M6 2a3 3 0 1 0 .1 0M11 8a3 3 0 1 0 .1 0M3 13l3-3']], [[K, 'M2 4h4l7 9M13 3L4 13'], [C, 'M9 3h4']]],
  dimedit: [
    [[K, 'M2 2v5M14 2v5'], [R, 'M2 8h12M5 5l-3 4 3 4M11 5l3 4-3 4']], [[K, 'M2 13h12'], [W, 'M5 9h6v4H5z'], [G, 'M8 2v6']], [[C, 'M4 10l7-7'], [Y, 'M7 11l6-6'], [K, 'M2 14h11']],
    [[R, 'M2 3v8M5 3v8M2 7h3M8 3v8h5V3z'], [K, 'M2 14h12']], [[B, 'M3 2v12h10'], [R, 'M8 4h5M8 7h5M8 4v7h5']], [[R, 'M2 3h5M2 3v6h4'], [K, 'M5 13L13 3M9 9h5v5']],
    [[K, H], [K, CAP]], [[K, 'M3 4l6 6M9 10l4-4M2 13h6']], [[K, H], [K, 'M6 3h4v4H6z']], [[K, H], [K, 'M4 4h2v3M8 4v3M11 4v3']], [[K, H], [B, 'M4 3v5M8 3h4v5H8']],
    [[R, H], [K, CAP]], [[R, H], [K, 'M5 3v4M8 3h3v4']], [[K, H], [K, 'M4 3h3v4M9 3l3 4']], [[K, H], [R, 'M4 3h7v5H4z']], [[K, 'M2 3v11M14 3v11M2 4h12'], [K, 'M5 8h6v4H5z']],
    [[G, 'M2 3v11M14 3v11'], [R, 'M5 5h6v6'], [B, 'M4 9h7']], [[G, 'M2 3l2 10 3-9 3 9 3-9'], [B, 'M2 3h12']], [[B, 'M2 3h12M2 13h12'], [G, 'M4 5h8v6H4z']], [[K, 'M3 4v10M13 4v10M3 7h10'], [R, 'M1 14h4M11 14h4']]],
  draw: [
    [[R, 'M8 2v5M8 9v5M2 8h5M9 8h5']], [[K, 'M2 3h12M2 13h12'], [R, 'M8 4v8'], [B, 'M5 8h6']], [[K, 'M2 4l9 10'], [R, 'M5 2l10 11']], [[C, 'M4 14L14 4'], [M, 'M2 4h6M4 7h4']],
    [[R, 'M3 11V4h4v7M9 11V4h4v7'], [C, 'M2 14h4M8 14h5']], [[M, 'M3 13V5h5l5-2v10'], [K, 'M6 9h4']], [[M, 'M2 4l5 4 4-1 3 6'], [K, 'M9 4l-4 9']], [[K, 'M2 3l4 4h4l4-4M2 13l4-4h4l4 4']],
    [[K, 'M2 4h8M2 8h8M4 2v12'], [Y, 'M10 3h4v4h-4zM11 9h3v5h-3z'], [C, 'M6 12h4']], [[G, 'M2 4h6v3H2z'], [Y, 'M9 4h5v8H9z'], [R, 'M3 12h6']], [[B, 'M3 14L8 2l5 12']],
    [[Y, 'M5 8l3-6 3 6'], [B, 'M2 14l3-5M14 14l-3-5']], [[B, 'M2 5l9 9M6 2l9 9'], [R, 'M4 4l9 9']], [[W, 'M2 14L8 8'], [R, 'M8 8l6-6']], [[R, 'M8 8l6-6'], [K, 'M2 14l6-6']], [[B, 'M4 3h8v5H4zM4 11h8'], [M, 'M8 3v10']]],
  style: [
    [[K, 'M2 11L6 2l4 9M3 8h5'], [W, 'M7 14l6-7']], [[K, 'M2 10L12 3M2 3v9'], [W, 'M7 14l6-6']], [[K, 'M2 3h11v6H2z'], [W, 'M7 14l6-6']], [[K, 'M3 13Q3 4 12 3v5'], [W, 'M6 14l7-7']]]
};

for (const box of document.querySelectorAll('[data-set]')) {
  box.innerHTML = sets[box.dataset.set].map(icon =>
    '<button><svg viewBox="0 0 16 16">' +
    icon.map(([color, d]) => `<path d="${d}" fill="none" stroke="${color}" stroke-width="1.700"/>`).join('') +
    '</svg></button>').join('');
}
```
